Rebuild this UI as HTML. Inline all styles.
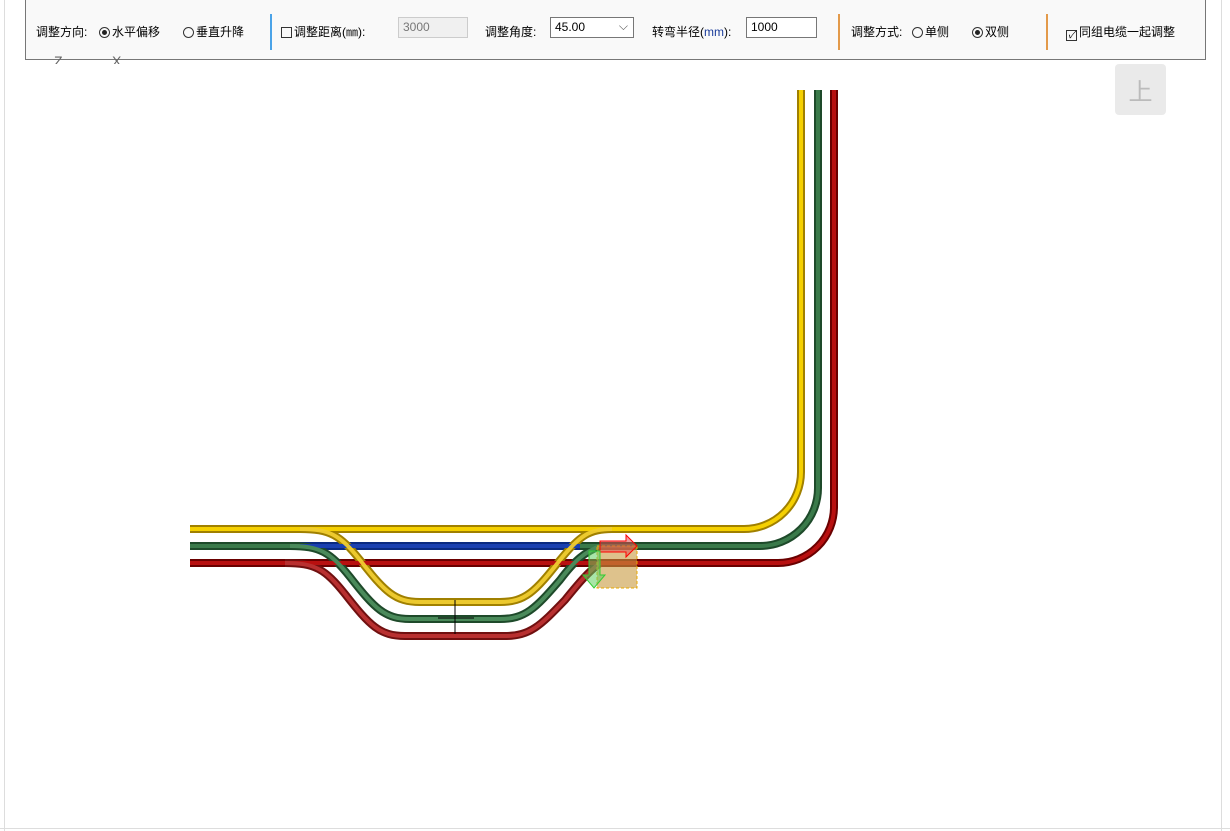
<!DOCTYPE html>
<html><head><meta charset="utf-8"><style>
body{margin:0;width:1230px;height:831px;background:#fff;position:relative;overflow:hidden;font-family:"Liberation Sans","Noto Sans CJK SC",sans-serif;font-size:12px;color:#000}
.tb{position:absolute;left:25px;top:0;width:1179px;height:59px;background:#f9f9f9;border:1px solid #777;border-top:none}
.t{position:absolute;top:23px;white-space:nowrap}
.r{display:inline-block;width:11px;height:11px;border:1px solid #333;border-radius:50%;vertical-align:-2px;margin-right:2px;box-sizing:border-box;position:relative}
.r.on:after{content:"";position:absolute;left:2px;top:2px;width:5px;height:5px;border-radius:50%;background:#222}
.c{display:inline-block;width:11px;height:11px;border:1px solid #333;vertical-align:-2px;margin-right:2px;box-sizing:border-box;font-size:10px;line-height:9px;text-align:center}
.sep{position:absolute;top:14px;width:2px;height:36px}
.in{position:absolute;top:17px;height:21px;border:1px solid #777;box-sizing:border-box;background:#fff;padding:2px 4px;font-size:12px}
</style></head><body>
<div style="position:absolute;left:4px;top:0;width:1px;height:831px;background:#ddd"></div>
<div style="position:absolute;left:1221px;top:0;width:1px;height:831px;background:#ddd"></div>
<div style="position:absolute;left:0;top:828px;width:1230px;height:1px;background:#ddd"></div>
<div class="tb">
<span class="t" style="left:10px">调整方向:</span>
<span class="t" style="left:73px"><i class="r on"></i>水平偏移</span>
<span class="t" style="left:157px"><i class="r"></i>垂直升降</span>
<div class="sep" style="left:244px;background:#4aa3e8"></div>
<span class="t" style="left:255px"><i class="c"></i>调整距离(㎜):</span>
<div class="in" style="left:372px;width:70px;background:#f0f0f0;border-color:#ccc;color:#777">3000</div>
<span class="t" style="left:459px">调整角度:</span>
<div class="in" style="left:524px;width:84px">45.00<span style="position:absolute;right:5px;top:1px;color:#555">⌵</span></div>
<span class="t" style="left:626px">转弯半径(<span style="color:#1a3c9a">mm</span>):</span>
<div class="in" style="left:720px;width:71px">1000</div>
<div class="sep" style="left:812px;background:#e39a4a"></div>
<span class="t" style="left:825px">调整方式:</span>
<span class="t" style="left:886px"><i class="r"></i>单侧</span>
<span class="t" style="left:946px"><i class="r on"></i>双侧</span>
<div class="sep" style="left:1020px;background:#e39a4a"></div>
<span class="t" style="left:1040px"><i class="c">✓</i>同组电缆一起调整</span>
</div>
<div style="position:absolute;left:54px;top:56px;color:#666;font-size:14px;line-height:10px;height:8px;overflow:hidden">Z</div>
<div style="position:absolute;left:112px;top:56px;color:#666;font-size:14px;line-height:10px;height:8px;overflow:hidden">X</div>
<div style="position:absolute;left:1115px;top:64px;width:51px;height:51px;background:#eaeaea;border-radius:4px;color:#bbb;font-size:24px;text-align:center;line-height:51px;font-family:'Noto Sans CJK SC',sans-serif">上</div>
<svg width="1230" height="831" style="position:absolute;left:0;top:0" fill="none" stroke-linecap="butt">
<g stroke-width="8">
<path d="M190 529H744A57 57 0 0 0 801 472V90" stroke="#a08000"/>
<path d="M190 546H760A58 58 0 0 0 818 488V90" stroke="#1e4a2a"/>
<path d="M190 563H778A56 56 0 0 0 834 507V90" stroke="#6a0000"/>
<path d="M300 546H580" stroke="#0a2a80"/>
<path d="M300 529C330 529 340 535 360 560C385 592 395 602 420 602H500C525 602 535 592 560 560C580 535 590 529 612 529" stroke="#a08000"/>
<path d="M290 546C320 546 330 552 350 577C375 609 385 619 410 619H500C525 619 535 609 560 580C575 560 585 552 600 546" stroke="#1e4a2a"/>
<path d="M285 563C315 563 325 569 345 594C370 626 380 636 405 636H505C530 636 540 626 565 600C578 584 588 572 600 563" stroke="#701010"/>
</g>
<g stroke-width="4">
<path d="M190 529H744A57 57 0 0 0 801 472V90" stroke="#f5d000"/>
<path d="M190 546H760A58 58 0 0 0 818 488V90" stroke="#3a7a4a"/>
<path d="M190 563H778A56 56 0 0 0 834 507V90" stroke="#b81010"/>
<path d="M300 546H580" stroke="#1a40b0"/>
<path d="M300 529C330 529 340 535 360 560C385 592 395 602 420 602H500C525 602 535 592 560 560C580 535 590 529 612 529" stroke="#f0cc30" opacity=".95"/>
<path d="M290 546C320 546 330 552 350 577C375 609 385 619 410 619H500C525 619 535 609 560 580C575 560 585 552 600 546" stroke="#4a8a5a"/>
<path d="M285 563C315 563 325 569 345 594C370 626 380 636 405 636H505C530 636 540 626 565 600C578 584 588 572 600 563" stroke="#b83030"/>
</g>
<rect x="597" y="546" width="40" height="42" fill="#c89a40" fill-opacity=".6" stroke="#e8a800" stroke-dasharray="3 2"/>
<path d="M600 541H626V535L637 546L626 557V552H600Z" fill="#e05050" fill-opacity=".55" stroke="#f00"/>
<path d="M589 551H600V575H605L594 588L583 575H589Z" fill="#60d060" fill-opacity=".55" stroke="#3c3"/>
<path d="M455 600V634M438 618H474" stroke="#000" stroke-width="1"/>
</svg>
</body></html>
